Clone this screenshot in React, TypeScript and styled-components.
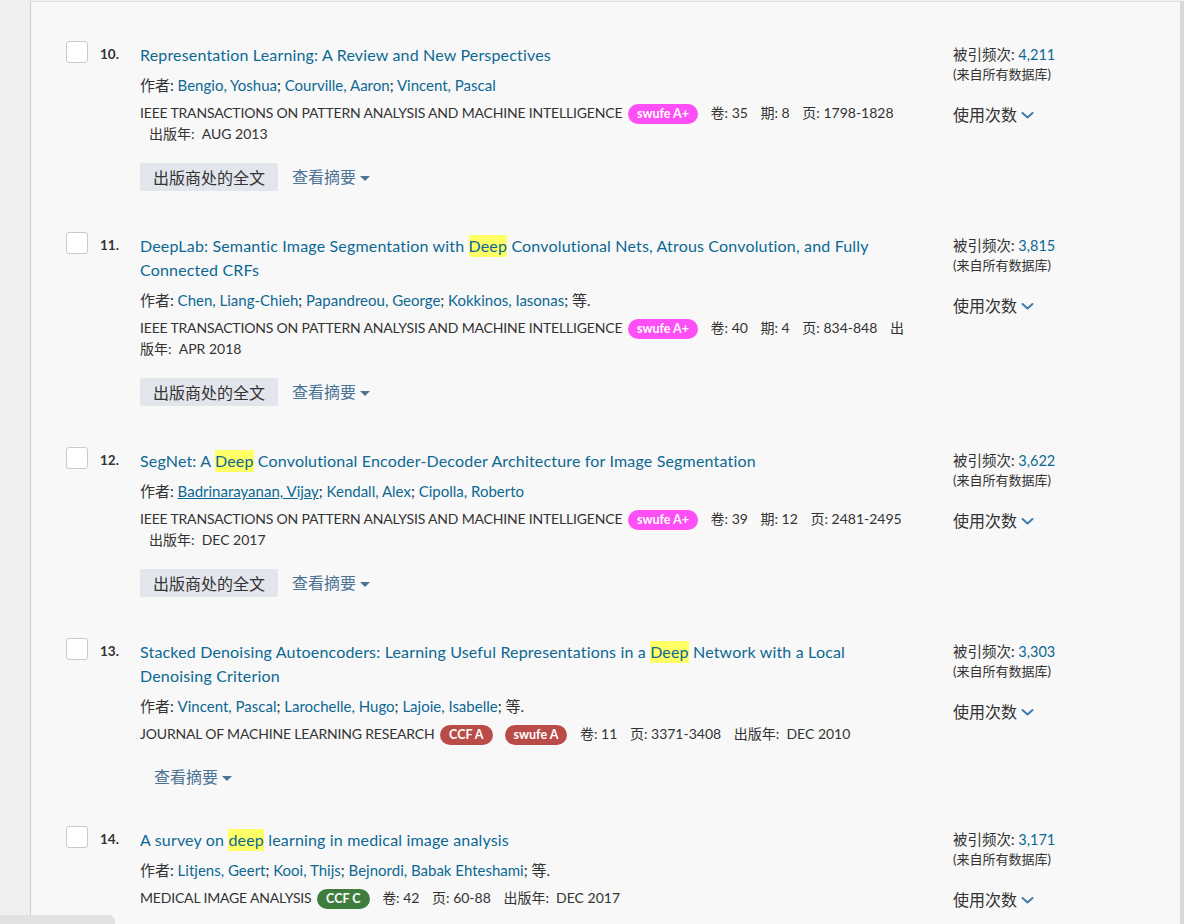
import React from 'react'
import styled, { createGlobalStyle, css } from 'styled-components'

const GlobalStyle = createGlobalStyle`
  html, body {
    margin: 0;
    padding: 0;
    background: #f0f0f0;
    overflow: hidden;
  }
  body {
    font-family: Lato, "Noto Sans CJK SC", sans-serif;
    color: #333;
  }
`

const Page = styled.div`
  position: relative;
  display: flex;
  height: 924px;
  overflow: hidden;
`

const LeftRail = styled.div`
  width: 30px;
  flex-shrink: 0;
  background: #f0f0f0;
`

const Panel = styled.main`
  flex: 1;
  margin-top: 1px;
  padding: 41px 0 0 35px;
  background: #f8f8f8;
  border-left: 1px solid #cdcdcd;
  border-top: 1px solid #dedede;
  border-right: 4px solid #d9d9d9;
`

const Record = styled.section`
  display: grid;
  grid-template-columns: 34px 40px 775px 1fr;
  margin-bottom: 43px;
`

const Check = styled.span`
  width: 20px;
  height: 20px;
  margin-top: -2px;
  background: #fff;
  border: 1px solid #c9c9c9;
  border-radius: 3px;
`

const Num = styled.span`
  font-size: 13.5px;
  font-weight: 700;
  line-height: 22px;
  color: #333;
`

const Body = styled.div`
  display: flex;
  flex-direction: column;
`

const Title = styled.a`
  font-size: 16px;
  line-height: 24px;
  letter-spacing: 0.17px;
  color: #0c6893;
  text-decoration: none;
  padding-right: 20px;
`

const Mark = styled.span`
  background: #ffff66;
  padding: 1px 0 2px;
`

const Line = styled.div<{ $gap: number; $size: number; $height: number }>`
  margin-top: ${(p) => p.$gap}px;
  font-size: ${(p) => p.$size}px;
  line-height: ${(p) => p.$height}px;
  color: #333;
`

const AuthorLink = styled.a<{ $underline?: boolean }>`
  color: #0c6893;
  text-decoration: ${(p) => (p.$underline ? 'underline' : 'none')};
`

const Journal = styled.span`
  text-transform: uppercase;
  letter-spacing: -0.18px;
`

const Badge = styled.span<{ $tone: 'pink' | 'red' | 'green' }>`
  display: inline-block;
  margin: -4px 0 -4px 2px;
  padding: 0 9px;
  height: 20px;
  line-height: 20px;
  border-radius: 10px;
  font-size: 12.5px;
  font-weight: 700;
  color: #fff;
  vertical-align: middle;
  background: ${(p) =>
    p.$tone === 'pink' ? '#fd4ff5' : p.$tone === 'red' ? '#b94b48' : '#3f7d3f'};
  & + & {
    margin-left: 12px;
  }
`

const Meta = styled.span<{ $wrap?: boolean }>`
  margin-left: 9px;
  ${(p) =>
    !p.$wrap &&
    css`
      white-space: nowrap;
    `}
`

const Actions = styled.div<{ $indent?: boolean }>`
  display: flex;
  align-items: center;
  gap: 14px;
  margin-top: ${(p) => (p.$indent ? '22px' : '19px')};
  margin-bottom: ${(p) => (p.$indent ? '-3px' : '0')};
  padding-left: ${(p) => (p.$indent ? '14px' : '0')};
`

const FullText = styled.button`
  height: 28px;
  padding: 0 13px;
  border: none;
  border-radius: 2px;
  background: #e3e5ec;
  font-family: inherit;
  font-size: 16px;
  color: #333;
`

const AbstractToggle = styled.span`
  display: inline-flex;
  align-items: center;
  gap: 4px;
  font-size: 16px;
  line-height: 22px;
  color: #4b7396;
`

const Caret = styled.span`
  width: 0;
  height: 0;
  border-left: 5px solid transparent;
  border-right: 5px solid transparent;
  border-top: 5px solid #4b7396;
  margin-top: 2px;
`

const Side = styled.aside`
  padding-left: 38px;
  padding-top: 2px;
`

const Cited = styled.div`
  font-size: 14.5px;
  line-height: 20px;
  color: #333;
`

const CiteNum = styled.span`
  color: #0c6893;
`

const CitedNote = styled.div`
  font-size: 13px;
  line-height: 18px;
  color: #333;
`

const Usage = styled.div`
  display: flex;
  align-items: center;
  gap: 4px;
  margin-top: 20px;
  font-size: 16px;
  line-height: 24px;
  color: #333;
`

const ScrollThumb = styled.div`
  position: absolute;
  left: 0;
  bottom: 0;
  width: 115px;
  height: 9px;
  background: #e1e1e1;
  border-top-right-radius: 6px;
`

type Tone = 'pink' | 'red' | 'green'

type Item = {
  n: number
  title: (string | { hl: string })[]
  authors: { name: string; underline?: boolean }[]
  etAl?: boolean
  journal: string
  badges: { label: string; tone: Tone }[]
  meta: string[]
  fullText: boolean
  abstract: boolean
  cited: string
}

const items: Item[] = [
  {
    n: 10,
    title: ['Representation Learning: A Review and New Perspectives'],
    authors: [{ name: 'Bengio, Yoshua' }, { name: 'Courville, Aaron' }, { name: 'Vincent, Pascal' }],
    journal: 'IEEE TRANSACTIONS ON PATTERN ANALYSIS AND MACHINE INTELLIGENCE',
    badges: [{ label: 'swufe A+', tone: 'pink' }],
    meta: ['卷: 35', '期: 8', '页: 1798-1828', '出版年:\u00a0 AUG 2013'],
    fullText: true,
    abstract: true,
    cited: '4,211',
  },
  {
    n: 11,
    title: [
      'DeepLab: Semantic Image Segmentation with ',
      { hl: 'Deep' },
      ' Convolutional Nets, Atrous Convolution, and Fully Connected CRFs',
    ],
    authors: [{ name: 'Chen, Liang-Chieh' }, { name: 'Papandreou, George' }, { name: 'Kokkinos, Iasonas' }],
    etAl: true,
    journal: 'IEEE TRANSACTIONS ON PATTERN ANALYSIS AND MACHINE INTELLIGENCE',
    badges: [{ label: 'swufe A+', tone: 'pink' }],
    meta: ['卷: 40', '期: 4', '页: 834-848', '出版年:\u00a0 APR 2018'],
    fullText: true,
    abstract: true,
    cited: '3,815',
  },
  {
    n: 12,
    title: ['SegNet: A ', { hl: 'Deep' }, ' Convolutional Encoder-Decoder Architecture for Image Segmentation'],
    authors: [
      { name: 'Badrinarayanan, Vijay', underline: true },
      { name: 'Kendall, Alex' },
      { name: 'Cipolla, Roberto' },
    ],
    journal: 'IEEE TRANSACTIONS ON PATTERN ANALYSIS AND MACHINE INTELLIGENCE',
    badges: [{ label: 'swufe A+', tone: 'pink' }],
    meta: ['卷: 39', '期: 12', '页: 2481-2495', '出版年:\u00a0 DEC 2017'],
    fullText: true,
    abstract: true,
    cited: '3,622',
  },
  {
    n: 13,
    title: [
      'Stacked Denoising Autoencoders: Learning Useful Representations in a ',
      { hl: 'Deep' },
      ' Network with a Local Denoising Criterion',
    ],
    authors: [{ name: 'Vincent, Pascal' }, { name: 'Larochelle, Hugo' }, { name: 'Lajoie, Isabelle' }],
    etAl: true,
    journal: 'JOURNAL OF MACHINE LEARNING RESEARCH',
    badges: [
      { label: 'CCF A', tone: 'red' },
      { label: 'swufe A', tone: 'red' },
    ],
    meta: ['卷: 11', '页: 3371-3408', '出版年:\u00a0 DEC 2010'],
    fullText: false,
    abstract: true,
    cited: '3,303',
  },
  {
    n: 14,
    title: ['A survey on ', { hl: 'deep' }, ' learning in medical image analysis'],
    authors: [{ name: 'Litjens, Geert' }, { name: 'Kooi, Thijs' }, { name: 'Bejnordi, Babak Ehteshami' }],
    etAl: true,
    journal: 'MEDICAL IMAGE ANALYSIS',
    badges: [{ label: 'CCF C', tone: 'green' }],
    meta: ['卷: 42', '页: 60-88', '出版年:\u00a0 DEC 2017'],
    fullText: false,
    abstract: false,
    cited: '3,171',
  },
]

function ChevronDown() {
  return (
    <svg width="13" height="9" viewBox="0 0 13 9" fill="none">
      <polyline points="1.5,2 6.5,6.5 11.5,2" stroke="#3d7cb0" strokeWidth="2" strokeLinecap="round" strokeLinejoin="round" />
    </svg>
  )
}

function ResultRow({ item }: { item: Item }) {
  return (
    <Record>
      <Check />
      <Num>{item.n}.</Num>
      <Body>
        <Title>
          {item.title.map((part, i) =>
            typeof part === 'string' ? <React.Fragment key={i}>{part}</React.Fragment> : <Mark key={i}>{part.hl}</Mark>
          )}
        </Title>
        <Line $gap={7} $size={15} $height={22}>
          作者:{' '}
          {item.authors.map((a, i) => (
            <React.Fragment key={a.name}>
              {i > 0 && '; '}
              <AuthorLink $underline={a.underline}>{a.name}</AuthorLink>
            </React.Fragment>
          ))}
          {item.etAl && '; 等.'}
        </Line>
        <Line $gap={6} $size={14} $height={21}>
          <Journal>{item.journal}</Journal>{' '}
          {item.badges.map((b) => (
            <Badge key={b.label} $tone={b.tone}>
              {b.label}
            </Badge>
          ))}
          {item.meta.map((m, i) => (
            <React.Fragment key={m}>
              {' '}
              <Meta $wrap={i === item.meta.length - 1}>{m}</Meta>
            </React.Fragment>
          ))}
        </Line>
        {item.abstract && (
          <Actions $indent={!item.fullText}>
            {item.fullText && <FullText>出版商处的全文</FullText>}
            <AbstractToggle>
              查看摘要 <Caret />
            </AbstractToggle>
          </Actions>
        )}
      </Body>
      <Side>
        <Cited>
          被引频次: <CiteNum>{item.cited}</CiteNum>
        </Cited>
        <CitedNote>(来自所有数据库)</CitedNote>
        <Usage>
          使用次数 <ChevronDown />
        </Usage>
      </Side>
    </Record>
  )
}

export default function App() {
  return (
    <>
      <GlobalStyle />
      <Page>
        <LeftRail />
        <Panel>
          {items.map((item) => (
            <ResultRow key={item.n} item={item} />
          ))}
        </Panel>
        <ScrollThumb />
      </Page>
    </>
  )
}
